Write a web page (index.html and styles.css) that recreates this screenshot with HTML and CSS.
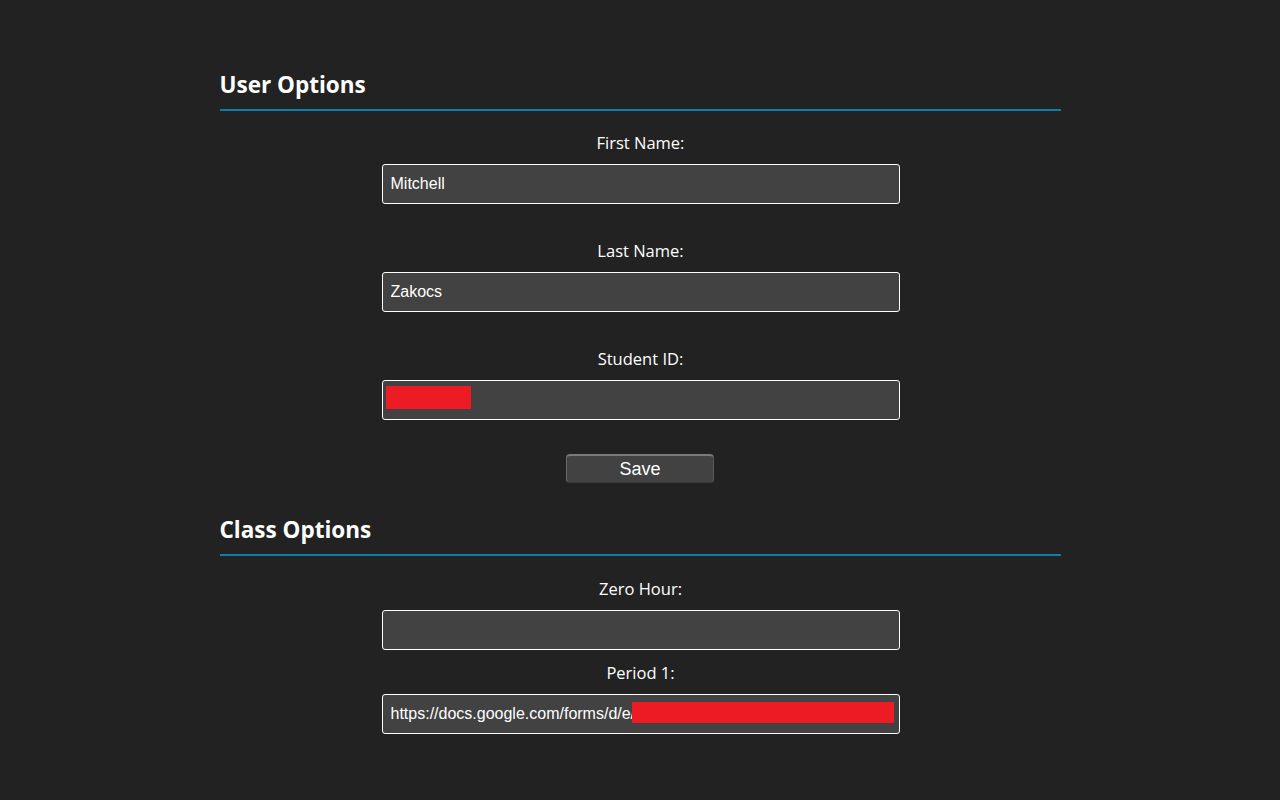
FILE: index.html
```html
<!DOCTYPE html>
<html lang="en">
<head>
<meta charset="utf-8">
<title>Options</title>
<link rel="stylesheet" href="styles.css">
</head>
<body>
<main class="page">
  <section class="section">
    <h2 class="section-title">User Options</h2>
    <div class="field field-spaced">
      <label class="field-label" for="first">First Name:</label>
      <div class="input-wrap"><input class="text-input" id="first" type="text" value="Mitchell"></div>
    </div>
    <div class="field field-spaced">
      <label class="field-label" for="last">Last Name:</label>
      <div class="input-wrap"><input class="text-input" id="last" type="text" value="Zakocs"></div>
    </div>
    <div class="field field-spaced">
      <label class="field-label" for="sid">Student ID:</label>
      <div class="input-wrap">
        <input class="text-input" id="sid" type="text" value="">
        <span class="redact redact-id"></span>
      </div>
    </div>
    <div class="actions"><button class="save-btn" type="button">Save</button></div>
  </section>
  <section class="section section-class">
    <h2 class="section-title">Class Options</h2>
    <div class="field">
      <label class="field-label" for="zero">Zero Hour:</label>
      <div class="input-wrap"><input class="text-input" id="zero" type="text" value=""></div>
    </div>
    <div class="field">
      <label class="field-label" for="p1">Period 1:</label>
      <div class="input-wrap">
        <input class="text-input" id="p1" type="text" value="https://docs.google.com/forms/d/e/1FAIpQLSdxxxxxxxxxxxxxxxxxxxxxxx">
        <span class="redact redact-url"></span>
      </div>
    </div>
  </section>
</main>
</body>
</html>
```

FILE: styles.css
```css
* { box-sizing: border-box; }

html, body {
  margin: 0;
  padding: 0;
  background: #222222;
  color: #ffffff;
  font-family: "Open Sans", "Noto Sans", sans-serif;
}

.page {
  width: 841px;
  margin: 0 auto;
  padding-top: 69px;
}

.section-title {
  margin: 0;
  font-size: 22.5px;
  line-height: 31px;
  font-weight: 700;
  padding-bottom: 9px;
  border-bottom: 2px solid #0f7ea6;
  margin-bottom: 20px;
}

.section-class {
  margin-top: 31px;
}

.section-class .section-title {
  margin-bottom: 21px;
}

.field {
  display: flex;
  flex-direction: column;
  align-items: center;
  padding-left: 1px;
}

.field-spaced {
  margin-bottom: 35px;
}

.field-label {
  font-size: 16.5px;
  line-height: 24px;
  height: 24px;
  margin-bottom: 9px;
}

.field + .field:not(.field-spaced) {
  margin-top: 11px;
}

.input-wrap {
  position: relative;
  width: 518px;
}

.text-input {
  display: block;
  width: 518px;
  height: 40px;
  padding: 0 8px;
  background: #424242;
  border: 1px solid #ffffff;
  border-radius: 3px;
  color: #ffffff;
  font-family: "Liberation Sans", Arial, sans-serif;
  font-size: 16px;
  outline: none;
}

.redact {
  position: absolute;
  background: #ed1c24;
}

.redact-id {
  left: 4px;
  top: 6px;
  width: 85px;
  height: 23px;
}

.redact-url {
  left: 250px;
  top: 8px;
  width: 262px;
  height: 21px;
}

.actions {
  display: flex;
  justify-content: center;
  margin-top: -1px;
}

.save-btn {
  width: 148px;
  height: 29px;
  padding: 0;
  background: #424242;
  color: #ffffff;
  border: 1px solid #5a5a5a;
  border-top: 2px solid #7a7a7a;
  border-left-color: #6a6a6a;
  border-bottom-color: #3a3a3a;
  border-radius: 4px;
  font-family: "Liberation Sans", Arial, sans-serif;
  font-size: 18px;
  line-height: 24px;
}
```
